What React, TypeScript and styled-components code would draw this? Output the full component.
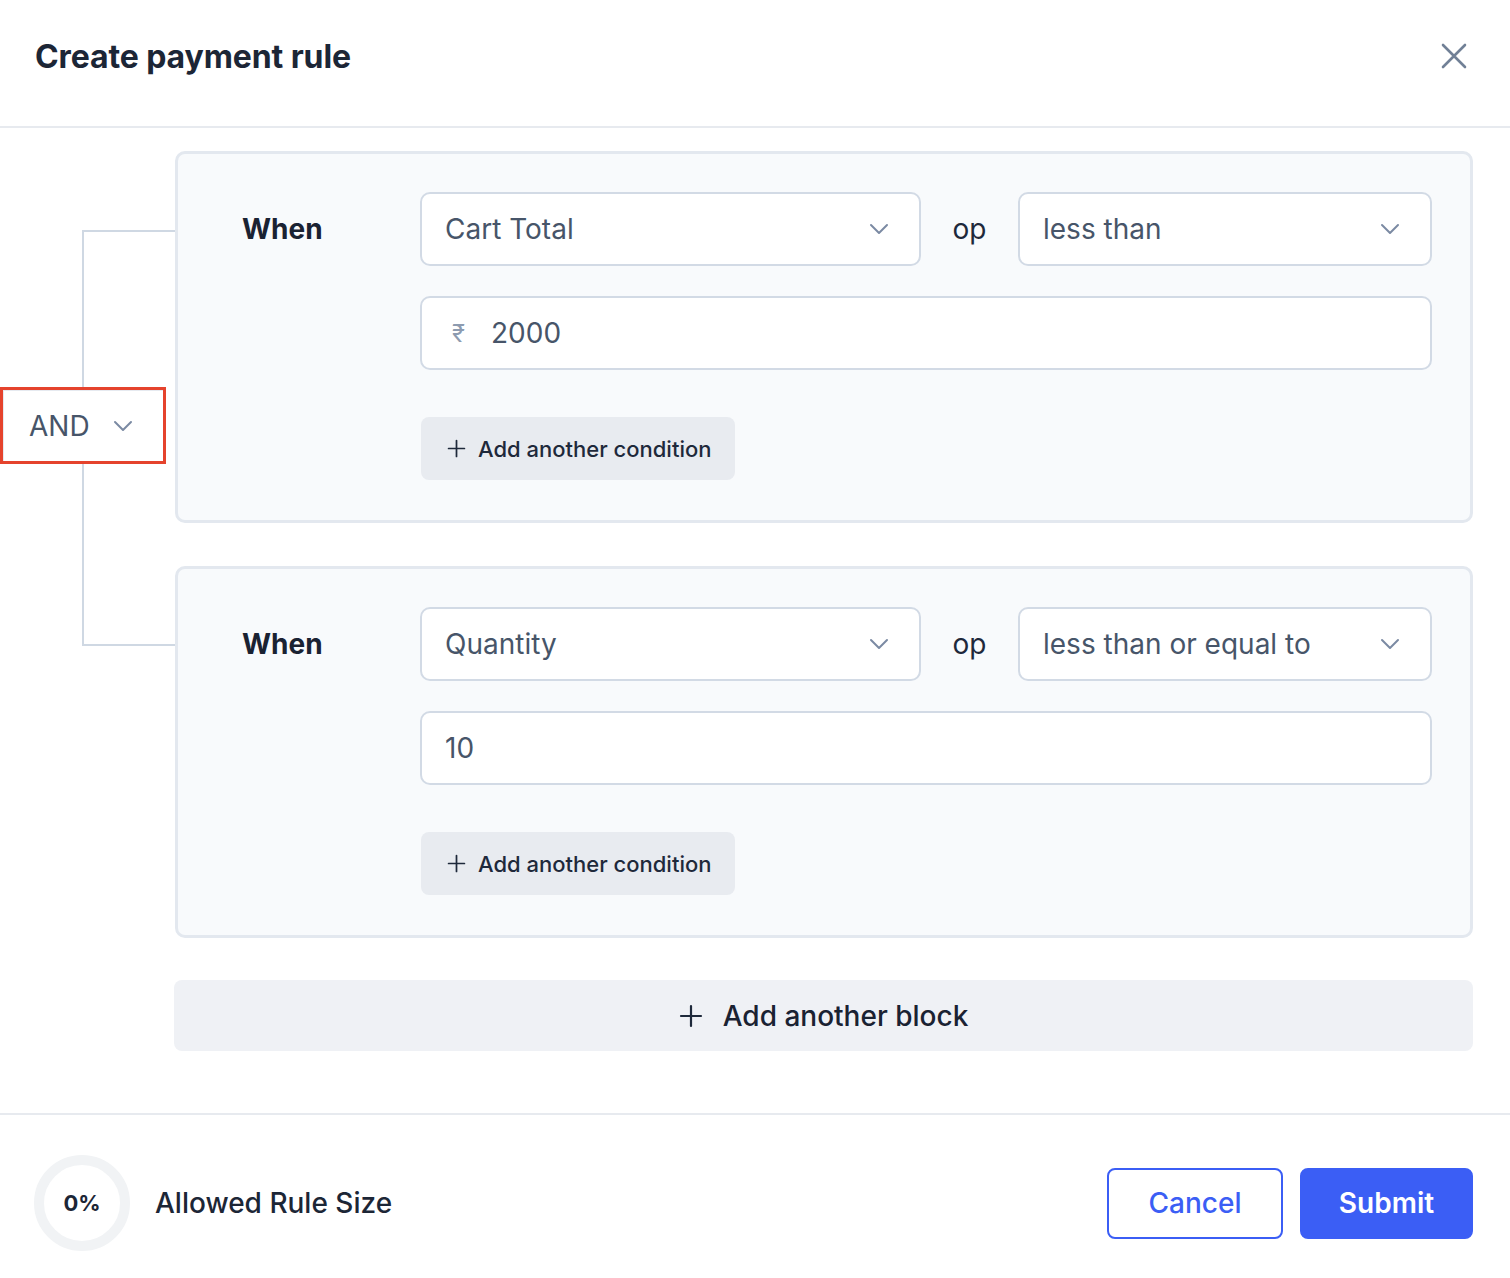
import React from 'react';
import styled, { createGlobalStyle } from 'styled-components';

const GlobalStyle = createGlobalStyle`
  * {
    box-sizing: border-box;
  }
  body {
    margin: 0;
    background: #ffffff;
    font-family: Inter, 'Noto Sans', 'Liberation Sans', sans-serif;
    color: #1e293b;
  }
`;

const Modal = styled.div`
  width: 100%;
  background: #ffffff;
`;

const Header = styled.header`
  height: 128px;
  display: flex;
  align-items: center;
  justify-content: space-between;
  padding: 0 42px 14px 35px;
  border-bottom: 2px solid #e7eaef;
`;

const Title = styled.h1`
  margin: 0;
  font-size: 32px;
  font-weight: 700;
  color: #1c2636;
  letter-spacing: -0.1px;
`;

const CloseButton = styled.button`
  border: none;
  background: none;
  padding: 0;
  width: 28px;
  height: 28px;
  display: flex;
  align-items: center;
  justify-content: center;
  cursor: pointer;
`;

const Body = styled.main`
  display: flex;
  padding: 23px 37px 62px 0;
  border-bottom: 2px solid #e7eaef;
`;

const ConnectorColumn = styled.div`
  width: 175px;
  flex-shrink: 0;
  padding-top: 79px;
`;

const Bracket = styled.div`
  position: relative;
  margin-left: 82px;
  width: 93px;
  height: 416px;
  border: 2px solid #cfd8e3;
  border-right: none;
`;

const AndSelect = styled.div`
  position: absolute;
  left: -84px;
  top: 155px;
  width: 166px;
  height: 77px;
  background: #ffffff;
  border: 3px solid #e5432d;
  display: flex;
  align-items: center;
  justify-content: space-between;
  padding: 0 30px 0 26px;
  font-size: 28px;
  color: #475569;
  box-shadow: inset 1px 1px 0 #e6eaf0;
`;

const Blocks = styled.div`
  flex: 1;
  display: flex;
  flex-direction: column;
  gap: 43px;
`;

const Block = styled.section`
  background: #f8fafc;
  border: 3px solid #e3e8ef;
  border-radius: 10px;
  padding: 38px 38px 40px 64px;
  display: grid;
  grid-template-columns: 178px 1fr 97px 414px;
  grid-auto-rows: auto;
  align-items: center;
`;

const WhenLabel = styled.div`
  font-size: 28px;
  font-weight: 700;
  color: #1a2232;
`;

const OpLabel = styled.div`
  font-size: 28px;
  color: #1e293b;
  text-align: center;
`;

const Field = styled.div<{ $wide?: boolean }>`
  height: 74px;
  background: #ffffff;
  border: 2px solid #d2dae5;
  border-radius: 10px;
  display: flex;
  align-items: center;
  padding: 0 30px 0 23px;
  font-size: 28px;
  color: #475569;
  ${(p) => (p.$wide ? 'grid-column: 2 / 5; margin-top: 30px;' : '')}
`;

const FieldText = styled.span`
  flex: 1;
`;

const Currency = styled.span`
  font-size: 24px;
  color: #8d9bb0;
  margin: 0 26px 0 7px;
`;

const ConditionButton = styled.button`
  grid-column: 2 / 4;
  justify-self: start;
  margin-top: 47px;
  margin-left: 1px;
  height: 63px;
  padding: 0 24px 0 26px;
  border: none;
  border-radius: 8px;
  background: #e8ebf0;
  display: flex;
  align-items: center;
  gap: 12px;
  font-family: inherit;
  font-size: 22px;
  font-weight: 500;
  color: #1e293b;
  cursor: pointer;
`;

const BlockButton = styled.button`
  height: 71px;
  margin-top: -1px;
  margin-left: -1px;
  border: none;
  border-radius: 8px;
  background: #eff1f5;
  display: flex;
  align-items: center;
  justify-content: center;
  gap: 20px;
  font-family: inherit;
  font-size: 28px;
  font-weight: 500;
  color: #1a2232;
  cursor: pointer;
`;

const Footer = styled.footer`
  display: flex;
  align-items: center;
  justify-content: space-between;
  padding: 40px 37px 40px 34px;
`;

const SizeInfo = styled.div`
  display: flex;
  align-items: center;
  gap: 25px;
`;

const Ring = styled.div`
  width: 96px;
  height: 96px;
  border-radius: 50%;
  border: 10px solid #f1f3f5;
  display: flex;
  align-items: center;
  justify-content: center;
  font-size: 22px;
  font-weight: 700;
  color: #1c2636;
`;

const SizeLabel = styled.span`
  font-size: 28px;
  font-weight: 500;
  color: #1c2636;
`;

const Actions = styled.div`
  display: flex;
  gap: 17px;
`;

const ActionButton = styled.button<{ $primary?: boolean }>`
  height: 71px;
  border-radius: 8px;
  font-family: inherit;
  font-size: 28px;
  font-weight: ${(p) => (p.$primary ? 600 : 500)};
  cursor: pointer;
  border: 2px solid #3b5ef5;
  background: ${(p) => (p.$primary ? '#3b5ef5' : '#ffffff')};
  color: ${(p) => (p.$primary ? '#ffffff' : '#3b5ef5')};
  width: ${(p) => (p.$primary ? '173px' : '176px')};
`;

const Chevron = () => (
  <svg width="20" height="12" viewBox="0 0 20 12" fill="none">
    <polyline points="2,2 10,10 18,2" stroke="#7b8aa3" strokeWidth="2" strokeLinecap="round" strokeLinejoin="round" />
  </svg>
);

const Plus = ({ size }: { size: number }) => (
  <svg width={size} height={size} viewBox="0 0 24 24" fill="none">
    <path d="M12 2v20M2 12h20" stroke="#1e293b" strokeWidth="2.2" strokeLinecap="round" />
  </svg>
);

const CloseIcon = () => (
  <svg width="26" height="26" viewBox="0 0 26 26" fill="none">
    <path d="M2 2l22 22M24 2L2 24" stroke="#718096" strokeWidth="2.6" strokeLinecap="round" />
  </svg>
);

type Condition = {
  field: string;
  op: string;
  value: string;
  currency?: boolean;
};

const conditions: Condition[] = [
  { field: 'Cart Total', op: 'less than', value: '2000', currency: true },
  { field: 'Quantity', op: 'less than or equal to', value: '10' },
];

const RuleBlock = ({ c }: { c: Condition }) => (
  <Block>
    <WhenLabel>When</WhenLabel>
    <Field>
      <FieldText>{c.field}</FieldText>
      <Chevron />
    </Field>
    <OpLabel>op</OpLabel>
    <Field>
      <FieldText>{c.op}</FieldText>
      <Chevron />
    </Field>
    <Field $wide>
      {c.currency && <Currency>₹</Currency>}
      <FieldText>{c.value}</FieldText>
    </Field>
    <ConditionButton>
      <Plus size={19} />
      Add another condition
    </ConditionButton>
  </Block>
);

const App = () => {
  return (
    <Modal>
      <GlobalStyle />
      <Header>
        <Title>Create payment rule</Title>
        <CloseButton aria-label="Close">
          <CloseIcon />
        </CloseButton>
      </Header>
      <Body>
        <ConnectorColumn>
          <Bracket>
            <AndSelect>
              AND
              <Chevron />
            </AndSelect>
          </Bracket>
        </ConnectorColumn>
        <Blocks>
          {conditions.map((c) => (
            <RuleBlock key={c.field} c={c} />
          ))}
          <BlockButton>
            <Plus size={24} />
            Add another block
          </BlockButton>
        </Blocks>
      </Body>
      <Footer>
        <SizeInfo>
          <Ring>0%</Ring>
          <SizeLabel>Allowed Rule Size</SizeLabel>
        </SizeInfo>
        <Actions>
          <ActionButton>Cancel</ActionButton>
          <ActionButton $primary>Submit</ActionButton>
        </Actions>
      </Footer>
    </Modal>
  );
};

export default App;
